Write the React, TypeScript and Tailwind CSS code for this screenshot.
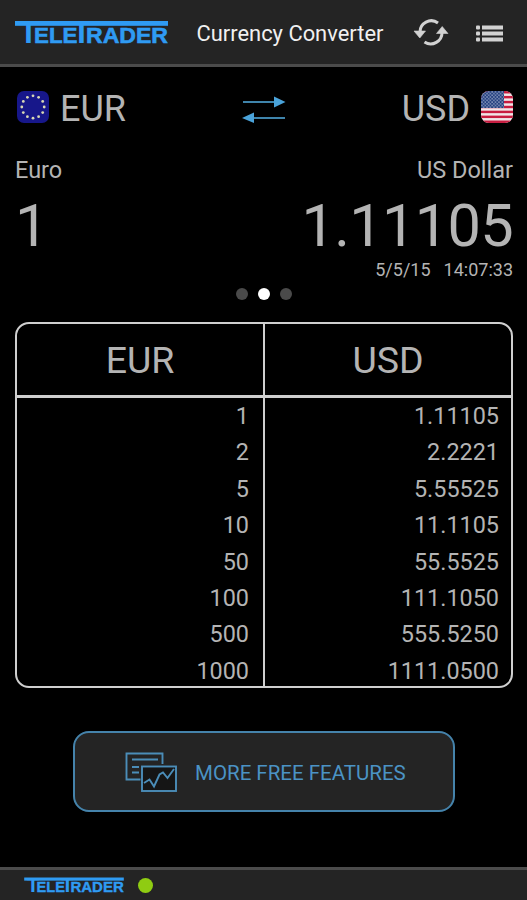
const rates = [
  ["1", "1.11105"],
  ["2", "2.2221"],
  ["5", "5.55525"],
  ["10", "11.1105"],
  ["50", "55.5525"],
  ["100", "111.1050"],
  ["500", "555.5250"],
  ["1000", "1111.0500"],
];

function Logo({ className }: { className: string }) {
  return (
    <svg viewBox="0 -10 153 43" className={className} fill="#2f9bf3" fontFamily="Liberation Sans, sans-serif" fontWeight="bold">
      <rect x="0" y="0" width="153" height="4.8" />
      <text y="22.3" fontSize="31">
        <tspan x="4">T</tspan>
        <tspan x="19" fontSize="22.5" textLength="43.5" lengthAdjust="spacingAndGlyphs" stroke="#2f9bf3" strokeWidth="0.6">ELE</tspan>
        <tspan x="57">T</tspan>
        <tspan x="71" fontSize="22.5" textLength="82" lengthAdjust="spacingAndGlyphs" stroke="#2f9bf3" strokeWidth="0.6">RADER</tspan>
      </text>
    </svg>
  );
}

function RefreshIcon() {
  return (
    <svg viewBox="0 0 36 28" className="w-9 h-7" fill="none" stroke="#d2d2d2" strokeWidth="3">
      <path d="M7 13.500A11.300 11.300 0 0 1 25 4" />
      <path d="M29 13A11.300 11.300 0 0 1 11.500 23" />
      <path d="M1 12H12.500L6.800 19Z" fill="#d2d2d2" stroke="#d2d2d2" strokeWidth="0.6" />
      <path d="M23.500 14.500H35L29.200 7.500Z" fill="#d2d2d2" stroke="#d2d2d2" strokeWidth="0.6" />
    </svg>
  );
}

function ListIcon() {
  return (
    <svg viewBox="0 0 28 17" className="w-7 h-[17px]" fill="#d2d2d2">
      {[0.5, 6.5, 12.5].map((y) => (
        <g key={y}>
          <rect x="0" y={y} width="4" height="4" rx="1" />
          <rect x="6" y={y} width="21" height="4" />
        </g>
      ))}
    </svg>
  );
}

function EuFlag() {
  return (
    <svg viewBox="0 0 32 32" className="w-8 h-8">
      <rect width="32" height="32" rx="7" fill="#17178a" />
      {Array.from({ length: 12 }, (_, i) => {
        const a = (i * Math.PI) / 6;
        return <circle key={i} cx={16 + 11.2 * Math.sin(a)} cy={16 - 11.2 * Math.cos(a)} r="1.4" fill="#d8d8b4" />;
      })}
    </svg>
  );
}

function UsFlag() {
  return (
    <svg viewBox="0 0 32 32" className="w-8 h-8">
      <defs>
        <clipPath id="us">
          <rect width="32" height="32" rx="8" />
        </clipPath>
        <pattern id="stars" width="3.4" height="3.4" patternUnits="userSpaceOnUse">
          <rect width="3.4" height="3.4" fill="#24407f" />
          <circle cx="0.9" cy="0.9" r="0.7" fill="#c2cae0" />
          <circle cx="2.6" cy="2.6" r="0.7" fill="#c2cae0" />
        </pattern>
      </defs>
      <g clipPath="url(#us)">
        <rect width="32" height="32" fill="#f0e6e8" />
        {[0, 1, 2, 3, 4, 5, 6].map((i) => (
          <rect key={i} y={i * 4.92} width="32" height="2.46" fill="#c81c40" />
        ))}
        <rect width="23" height="17" fill="url(#stars)" />
      </g>
    </svg>
  );
}

function SwapIcon() {
  return (
    <svg viewBox="0 0 44 28" className="w-11 h-7">
      <path d="M1 7H33M10 23H43" stroke="#3f84ab" strokeWidth="2" />
      <path d="M32 1.500V12.500L43.500 7ZM12 17.500V28L0 23Z" fill="#4aa3da" />
    </svg>
  );
}

function FeaturesIcon() {
  return (
    <svg viewBox="0 0 52 40" className="w-[52px] h-10" fill="none" stroke="#4b8db8" strokeWidth="1.900">
      <path d="M15.500 27.500H1.500V1.500H37.500V12" />
      <path d="M7 7.500H33M7 15H14M7 20.500H14" />
      <rect x="17" y="14.500" width="34" height="24.500" fill="#151515" />
      <path d="M19 31L24.500 27.500L29 34.500L34.500 22.500L38 20.500L42.500 26L49 17" />
    </svg>
  );
}

export default function App() {
  return (
    <div className="w-full h-[900px] flex flex-col bg-black text-[#b4b4b4] font-['Roboto',sans-serif] overflow-hidden">
      <header className="h-[67px] shrink-0 flex items-center bg-[#242424] border-b-3 border-[#4b4b4b] pl-[15px] pr-[23px]">
        <Logo className="w-[153px] h-[43px]" />
        <h1 className="ml-[28.5px] mt-[3px] text-[21.9px] leading-8 text-[#f0f0f0] font-normal whitespace-nowrap">Currency Converter</h1>
        <div className="ml-auto mt-0.5 flex items-center gap-[27px]">
          <RefreshIcon />
          <ListIcon />
        </div>
      </header>

      <main className="flex-1 flex flex-col pl-[15px] pr-[14px]">
        <div className="mt-5 h-11 flex items-center justify-between">
          <div className="w-[150px] flex items-center pl-0.5">
            <div className="-mt-1"><EuFlag /></div>
            <span className="ml-[11px] text-[36px] leading-11">EUR</span>
          </div>
          <SwapIcon />
          <div className="w-[150px] flex items-center justify-end">
            <span className="mr-[11px] text-[36px] leading-11">USD</span>
            <div className="-mt-1"><UsFlag /></div>
          </div>
        </div>

        <div className="mt-[23px] flex justify-between text-[23.5px] leading-8">
          <span>Euro</span>
          <span>US Dollar</span>
        </div>
        <div className="mt-[10px] flex justify-between text-[59.5px] leading-[60px] tracking-[-0.7px]">
          <span>1</span>
          <span>1.11105</span>
        </div>
        <div className="mt-0.5 flex justify-end gap-[13px] text-[18px] leading-6">
          <span>5/5/15</span>
          <span>14:07:33</span>
        </div>
        <div className="mt-[6px] flex justify-center gap-[10px]">
          <span className="size-3 rounded-full bg-[#4a4a4a]" />
          <span className="size-3 rounded-full bg-white" />
          <span className="size-3 rounded-full bg-[#4a4a4a]" />
        </div>

        <div className="mt-[22px] h-[366px] shrink-0 border-2 border-[#cfcfcf] rounded-[14px] overflow-hidden">
          <div className="h-[74px] grid grid-cols-[248px_1fr] border-b-3 border-[#cfcfcf] text-[37.5px] text-center">
            <div className="border-r-2 border-[#cfcfcf] leading-[73px]">EUR</div>
            <div className="leading-[73px]">USD</div>
          </div>
          {rates.map(([eur, usd]) => (
            <div key={eur} className="h-[36.4px] grid grid-cols-[248px_1fr] text-right text-[23.4px] leading-[36px]">
              <div className="border-r-2 border-[#cfcfcf] pr-[14px]">{eur}</div>
              <div className="pr-[12px]">{usd}</div>
            </div>
          ))}
        </div>

        <button className="mt-[43px] self-center w-[382px] h-[81px] flex items-center border-2 border-[#4583ab] rounded-2xl bg-[#242424] pl-[50px] text-[20.5px] text-[#4b93c4]">
          <FeaturesIcon />
          <span className="ml-[18px] mt-[3px] whitespace-nowrap">MORE FREE FEATURES</span>
        </button>
      </main>

      <footer className="h-[33px] shrink-0 flex items-center bg-[#242424] border-t-3 border-[#4b4b4b] pl-6">
        <Logo className="w-[100px] h-[28px]" />
        <span className="ml-[14px] size-[15px] rounded-full bg-[#8fcc12]" />
      </footer>
    </div>
  );
}
